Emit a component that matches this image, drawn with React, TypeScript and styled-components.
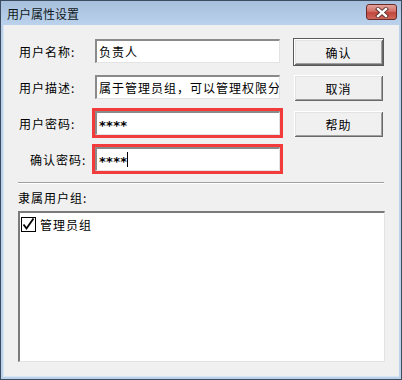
import styled, { createGlobalStyle } from "styled-components";

const GlobalStyle = createGlobalStyle`
  html, body {
    margin: 0;
    padding: 0;
    background: #ffffff;
  }
  body {
    font-family: "Noto Sans CJK SC", "DejaVu Sans", sans-serif;
    font-size: 12px;
    color: #000;
  }
`;

const Window = styled.div`
  width: 402px;
  height: 380px;
  box-sizing: border-box;
  border: 1px solid #3c4b5e;
  background: #b9d1ea;
  display: flex;
  flex-direction: column;
  padding: 0 2px 2px 2px;
`;

const TitleBar = styled.div`
  height: 24px;
  flex: none;
  display: flex;
  align-items: center;
  justify-content: space-between;
  background: linear-gradient(#a6bfdc, #bad2ec);
  margin: 0 -2px;
  padding-left: 6px;
  padding-right: 4px;
`;

const Title = styled.span`
  font-size: 12px;
  line-height: 14px;
  color: #101820;
  margin-top: 2px;
`;

const CloseButton = styled.div`
  width: 31px;
  height: 16px;
  box-sizing: border-box;
  border: 1px solid #6b2a28;
  border-radius: 3px;
  background: linear-gradient(#e3a49c 0%, #d27066 45%, #c1463b 55%, #d0685c 100%);
  display: flex;
  align-items: center;
  justify-content: center;
  margin-top: -2px;
`;

const Client = styled.div`
  flex: 1;
  background: #f0f0f0;
  border-left: 1px solid #dbe6f3;
  border-bottom: 1px solid #dbe6f3;
  padding: 13px 14px 0 14px;
  display: flex;
  flex-direction: column;
`;

const TopSection = styled.div`
  display: flex;
  align-items: flex-start;
`;

const FormGrid = styled.div`
  display: grid;
  grid-template-columns: 77px 185px;
  grid-auto-rows: 24px;
  row-gap: 12px;
  margin-top: 1px;
`;

const Label = styled.div<{ $indent?: number }>`
  display: flex;
  align-items: center;
  letter-spacing: 1px;
  padding-left: ${(p) => p.$indent || 0}px;
  white-space: nowrap;
`;

const TextBox = styled.div<{ $highlight?: boolean }>`
  box-sizing: border-box;
  height: 24px;
  background: #fff;
  border-style: solid;
  border-width: 2px 1px 1px 2px;
  border-color: #8a8a8a #e3e3e3 #e3e3e3 #8a8a8a;
  padding: 0 2px;
  display: flex;
  align-items: center;
  letter-spacing: 1px;
  white-space: nowrap;
  overflow: hidden;
  outline: ${(p) => (p.$highlight ? "3px solid #f23c3c" : "none")};
  outline-offset: 0px;
`;

const Mask = styled.span`
  font-family: "DejaVu Sans", sans-serif;
  font-size: 13px;
  font-weight: bold;
  letter-spacing: 0.3px;
  line-height: 13px;
  padding-top: 3px;
`;

const Caret = styled.span`
  display: inline-block;
  width: 1px;
  height: 15px;
  background: #000;
  margin-left: 0;
`;

const ButtonColumn = styled.div`
  display: flex;
  flex-direction: column;
  gap: 8px;
  margin-left: 13px;
`;

const DialogButton = styled.div<{ $default?: boolean }>`
  width: 91px;
  height: 28px;
  box-sizing: border-box;
  background: #f0f0f0;
  border: 1px solid ${(p) => (p.$default ? "#5a5a5a" : "transparent")};
  box-shadow: inset 1px 1px 0 #ffffff, inset -1px -1px 0 #696969,
    inset 2px 2px 0 #e3e3e3, inset -2px -2px 0 #a0a0a0;
  display: flex;
  align-items: center;
  justify-content: center;
  letter-spacing: 1px;
`;

const Separator = styled.div`
  margin-top: 11px;
  width: 366px;
  height: 0;
  border-top: 1px solid #a0a0a0;
  border-bottom: 1px solid #ffffff;
`;

const SectionLabel = styled.div`
  margin-top: 6px;
  height: 15px;
  line-height: 15px;
  letter-spacing: 1px;
`;

const ListBox = styled.div`
  margin-top: 6px;
  width: 367px;
  height: 151px;
  box-sizing: border-box;
  background: #fff;
  border-style: solid;
  border-width: 2px 1px 1px 2px;
  border-color: #7a7a7a #e3e3e3 #e3e3e3 #7a7a7a;
  padding: 3px 1px;
`;

const ListItem = styled.div`
  display: flex;
  align-items: center;
  gap: 4px;
  height: 16px;
  letter-spacing: 1px;
`;

const CheckBox = styled.div`
  width: 15px;
  height: 15px;
  box-sizing: border-box;
  border: 1px solid #000;
  background: #fff;
  display: flex;
  align-items: center;
  justify-content: center;
`;

export default function App() {
  return (
    <>
      <GlobalStyle />
      <Window>
        <TitleBar>
          <Title>用户属性设置</Title>
          <CloseButton>
            <svg width="14" height="11" viewBox="0 0 14 11">
              <path
                d="M3 2 L11 9 M11 2 L3 9"
                stroke="#4a2320"
                strokeWidth="4"
                strokeLinecap="square"
              />
              <path
                d="M3 2 L11 9 M11 2 L3 9"
                stroke="#ffffff"
                strokeWidth="2.4"
                strokeLinecap="square"
              />
            </svg>
          </CloseButton>
        </TitleBar>
        <Client>
          <TopSection>
            <FormGrid>
              <Label $indent={1}>用户名称:</Label>
              <TextBox>负责人</TextBox>
              <Label $indent={1}>用户描述:</Label>
              <TextBox>属于管理员组，可以管理权限分</TextBox>
              <Label $indent={1}>用户密码:</Label>
              <TextBox $highlight>
                <Mask>****</Mask>
              </TextBox>
              <Label $indent={12}>确认密码:</Label>
              <TextBox $highlight>
                <Mask>****</Mask>
                <Caret />
              </TextBox>
            </FormGrid>
            <ButtonColumn>
              <DialogButton $default>确认</DialogButton>
              <DialogButton>取消</DialogButton>
              <DialogButton>帮助</DialogButton>
            </ButtonColumn>
          </TopSection>
          <Separator />
          <SectionLabel>隶属用户组:</SectionLabel>
          <ListBox>
            <ListItem>
              <CheckBox>
                <svg width="13" height="13" viewBox="0 0 13 13">
                  <path
                    d="M1.5 6.5 L4.5 10.5 L11.5 0.5"
                    fill="none"
                    stroke="#000"
                    strokeWidth="1.8"
                  />
                </svg>
              </CheckBox>
              管理员组
            </ListItem>
          </ListBox>
        </Client>
      </Window>
    </>
  );
}
